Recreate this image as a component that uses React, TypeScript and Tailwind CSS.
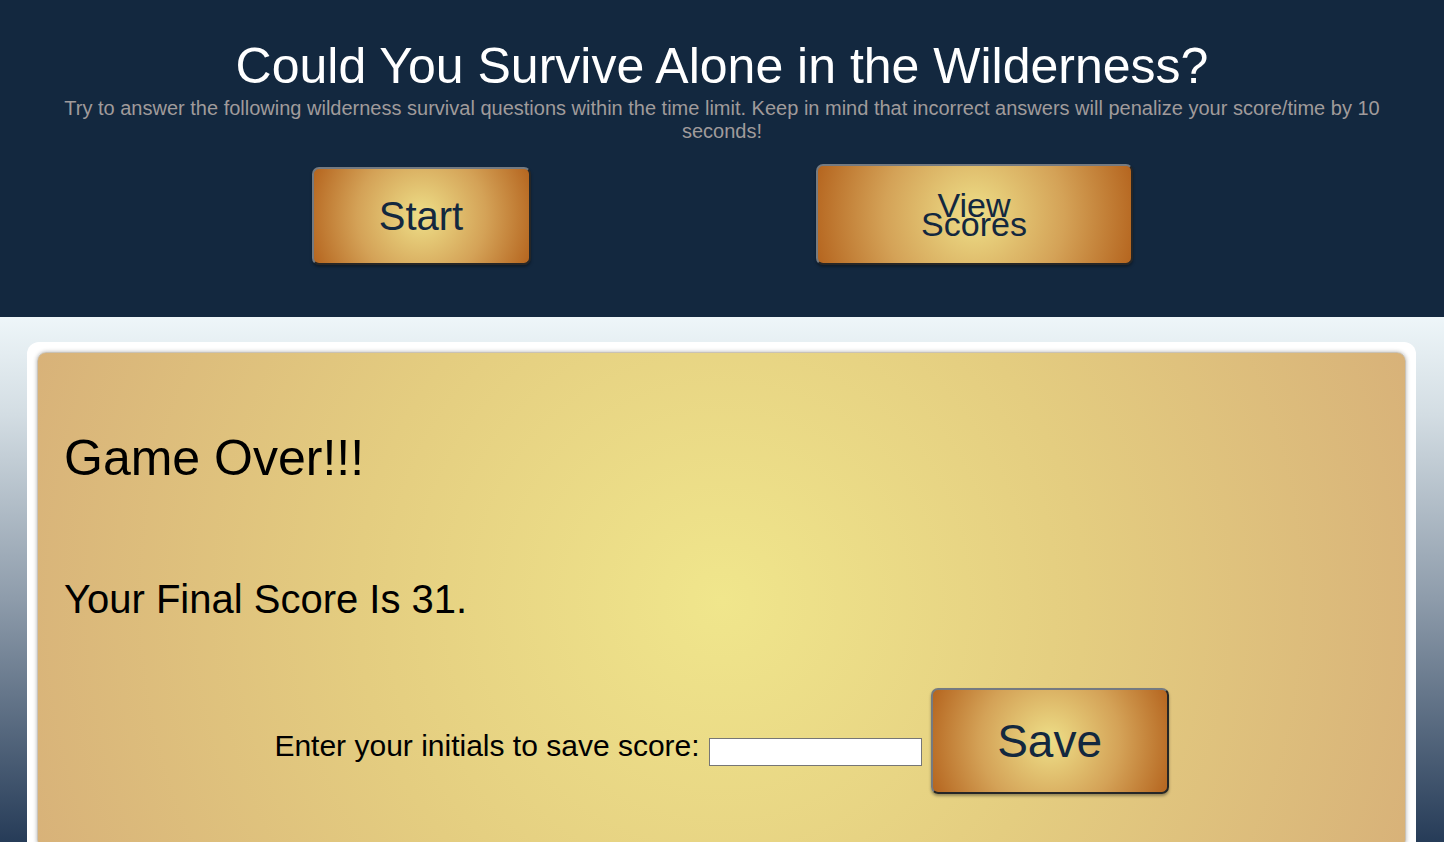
const btnBase =
  "flex items-center justify-center text-center rounded-[7px] border-2 border-t-[#757a80] border-l-[#757a80] border-b-[#262626] border-r-[#262626] bg-[radial-gradient(circle,#eedf88_0%,#d4a257_55%,#b5651f_100%)] text-[#13283f] shadow-[0_2px_3px_rgba(0,0,0,0.35)]";

export default function App() {
  return (
    <div className="min-h-screen flex flex-col font-['Liberation_Sans',Arial,sans-serif] bg-[#13283f]">
      <header className="bg-[#13283f] pt-[38px] pb-[52px] px-14 text-center">
        <h1 className="text-[50px] leading-[57px] text-white">
          Could You Survive Alone in the Wilderness?
        </h1>
        <p className="text-[20px] leading-[23px] text-[#a09b9b] mt-[2px]">
          Try to answer the following wilderness survival questions within the time limit. Keep in mind that incorrect answers will penalize your score/time by 10 seconds!
        </p>
        <div className="flex justify-center items-end gap-[285px] mt-[21px]">
          <button className={`${btnBase} w-[219px] h-[98px] text-[40px] leading-[46px]`}>
            Start
          </button>
          <button className={`${btnBase} w-[317px] h-[101px] text-[34px] leading-[19px] flex-col`}>
            <span>View</span>
            <span>Scores</span>
          </button>
        </div>
      </header>

      <div className="flex-1 pt-[25px] bg-[linear-gradient(to_bottom,#eef6f9_0%,#d3dde3_18%,#8e9cab_52%,#1f3552_100%)]">
        <main className="ml-[27px] mr-[28px] bg-white rounded-[12px] p-[10px]">
          <div className="rounded-[9px] border border-[#c9c2b6] shadow-[0_0_4px_rgba(0,0,0,0.3)] bg-[radial-gradient(circle,#f0e68c_0%,#e4cd80_50%,#d8b279_100%)] pl-[26px] pr-[26px] pt-[77px] pb-[54px] text-black">
            <h2 className="text-[50px] leading-[57px]">Game Over!!!</h2>
            <p className="text-[40px] leading-[46px] mt-[89px]">Your Final Score Is 31.</p>
            <div className="flex justify-center items-end gap-[9px] mt-[66px]">
              <label htmlFor="initials" className="text-[30px] leading-[34px] mb-[31px]">
                Enter your initials to save score:
              </label>
              <input
                id="initials"
                type="text"
                className="w-[213px] h-[28px] bg-white border border-[#767676] mb-[28px] outline-none"
              />
              <button className={`${btnBase} w-[238px] h-[106px] text-[46px] leading-[52px]`}>
                Save
              </button>
            </div>
          </div>
        </main>
      </div>
    </div>
  );
}
